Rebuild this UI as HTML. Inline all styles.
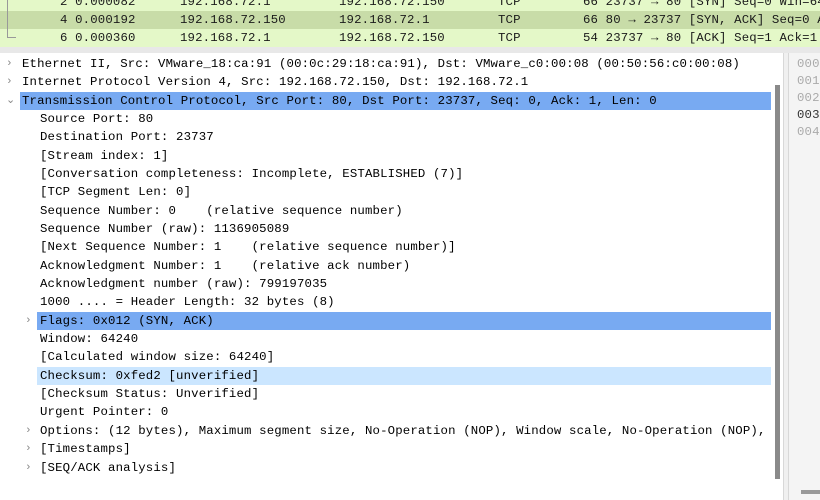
<!DOCTYPE html>
<html><head><style>
body{margin:0;width:820px;height:500px;overflow:hidden;background:#f0f0f0;font-family:"Liberation Mono",monospace;font-size:12.35px;letter-spacing:0.15px;position:relative}
.pl{position:absolute;left:0;width:820px;height:18px;background:#e4f8c8}
.pl span{position:absolute;top:0;line-height:18px;white-space:pre;color:#1a1a1a}
#tree{position:absolute;left:0;top:53px;width:783px;height:447px;background:#fff;border-right:1px solid #d8d8d8}
#hex{position:absolute;left:788px;top:53px;width:32px;height:447px;background:#f4f4f4;border-left:1px solid #d8d8d8}
.t{position:absolute;white-space:pre;line-height:18px;color:#000}
.hl{position:absolute;height:18px;background:#78aaf2}
.hl2{position:absolute;height:18px;background:#cbe6ff}
.ar{position:absolute;color:#888;font-size:11px;line-height:18px}
</style></head><body>
<div class="pl" style="top:-7px"><span style="left:60px">2 0.000082</span><span style="left:180px">192.168.72.1</span><span style="left:339px">192.168.72.150</span><span style="left:498px">TCP</span><span style="left:583px">66 23737 → 80 [SYN] Seq=0 Win=64</span></div>
<div class="pl" style="top:11px;background:#c8dca8"><span style="left:60px">4 0.000192</span><span style="left:180px">192.168.72.150</span><span style="left:339px">192.168.72.1</span><span style="left:498px">TCP</span><span style="left:583px">66 80 → 23737 [SYN, ACK] Seq=0 A</span></div>
<div class="pl" style="top:29px"><span style="left:60px">6 0.000360</span><span style="left:180px">192.168.72.1</span><span style="left:339px">192.168.72.150</span><span style="left:498px">TCP</span><span style="left:583px">54 23737 → 80 [ACK] Seq=1 Ack=1 </span></div>
<div style="position:absolute;left:7px;top:0;width:8px;height:37px;border-left:1px solid #999;border-bottom:1px solid #999"></div>
<div style="position:absolute;left:0;top:47px;width:820px;height:6px;background:#e8e8e8"></div>
<div id="tree">
<div class="hl" style="left:20px;top:39px;width:751px"></div>
<div class="hl" style="left:37px;top:259px;width:734px"></div>
<div class="hl2" style="left:37px;top:314px;width:734px"></div>
<div style="position:absolute;left:775px;top:32px;width:5px;height:394px;background:#8a8a8a"></div>
<span class="ar" style="left:6px;top:2px">›</span>
<span class="ar" style="left:6px;top:20px">›</span>
<span class="ar" style="left:6px;top:39px">⌄</span>
<span class="ar" style="left:25px;top:259px">›</span>
<span class="ar" style="left:25px;top:369px">›</span>
<span class="ar" style="left:25px;top:387px">›</span>
<span class="ar" style="left:25px;top:406px">›</span>
<div class="t" style="left:22px;top:2px">Ethernet II, Src: VMware_18:ca:91 (00:0c:29:18:ca:91), Dst: VMware_c0:00:08 (00:50:56:c0:00:08)</div>
<div class="t" style="left:22px;top:20px">Internet Protocol Version 4, Src: 192.168.72.150, Dst: 192.168.72.1</div>
<div class="t" style="left:22px;top:39px">Transmission Control Protocol, Src Port: 80, Dst Port: 23737, Seq: 0, Ack: 1, Len: 0</div>
<div class="t" style="left:40px;top:57px">Source Port: 80</div>
<div class="t" style="left:40px;top:75px">Destination Port: 23737</div>
<div class="t" style="left:40px;top:94px">[Stream index: 1]</div>
<div class="t" style="left:40px;top:112px">[Conversation completeness: Incomplete, ESTABLISHED (7)]</div>
<div class="t" style="left:40px;top:130px">[TCP Segment Len: 0]</div>
<div class="t" style="left:40px;top:149px">Sequence Number: 0    (relative sequence number)</div>
<div class="t" style="left:40px;top:167px">Sequence Number (raw): 1136905089</div>
<div class="t" style="left:40px;top:185px">[Next Sequence Number: 1    (relative sequence number)]</div>
<div class="t" style="left:40px;top:204px">Acknowledgment Number: 1    (relative ack number)</div>
<div class="t" style="left:40px;top:222px">Acknowledgment number (raw): 799197035</div>
<div class="t" style="left:40px;top:240px">1000 .... = Header Length: 32 bytes (8)</div>
<div class="t" style="left:40px;top:259px">Flags: 0x012 (SYN, ACK)</div>
<div class="t" style="left:40px;top:277px">Window: 64240</div>
<div class="t" style="left:40px;top:295px">[Calculated window size: 64240]</div>
<div class="t" style="left:40px;top:314px">Checksum: 0xfed2 [unverified]</div>
<div class="t" style="left:40px;top:332px">[Checksum Status: Unverified]</div>
<div class="t" style="left:40px;top:350px">Urgent Pointer: 0</div>
<div class="t" style="left:40px;top:369px">Options: (12 bytes), Maximum segment size, No-Operation (NOP), Window scale, No-Operation (NOP),</div>
<div class="t" style="left:40px;top:387px">[Timestamps]</div>
<div class="t" style="left:40px;top:406px">[SEQ/ACK analysis]</div>
</div>
<div id="hex">
<div class="t" style="left:8px;top:2px;color:#aaa">0000</div>
<div class="t" style="left:8px;top:19px;color:#aaa">0010</div>
<div class="t" style="left:8px;top:36px;color:#aaa">0020</div>
<div class="t" style="left:8px;top:53px;color:#333">0030</div>
<div class="t" style="left:8px;top:70px;color:#aaa">0040</div>
<div style="position:absolute;left:12px;top:437px;width:24px;height:4px;background:#999"></div>
</div>
</body></html>
